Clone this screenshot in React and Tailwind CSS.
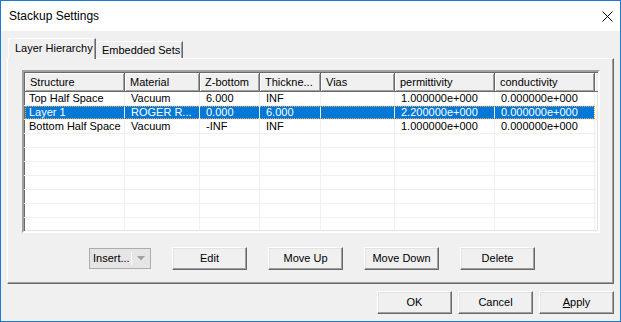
import React from "react";

const cols = [
  { label: "Structure", w: "w-[100px]", first: true },
  { label: "Material", w: "w-[75px]" },
  { label: "Z-bottom", w: "w-[60px]" },
  { label: "Thickne...", w: "w-[61px]" },
  { label: "Vias", w: "w-[74px]" },
  { label: "permittivity", w: "w-[100px]" },
  { label: "conductivity", w: "w-[100px]" },
];

const rows = [
  ["Top Half Space", "Vacuum", "6.000", "INF", "", "1.000000e+000", "0.000000e+000"],
  ["Layer 1", "ROGER R...", "0.000", "6.000", "", "2.200000e+000", "0.000000e+000"],
  ["Bottom Half Space", "Vacuum", "-INF", "INF", "", "1.000000e+000", "0.000000e+000"],
  ["", "", "", "", "", "", ""],
  ["", "", "", "", "", "", ""],
  ["", "", "", "", "", "", ""],
  ["", "", "", "", "", "", ""],
  ["", "", "", "", "", "", ""],
  ["", "", "", "", "", "", ""],
  ["", "", "", "", "", "", ""],
];

function Btn({ children, className = "" }) {
  return (
    <div
      className={`w-[75px] h-[23px] flex items-center justify-center bg-[#f0f0f0] border border-t-white border-l-white border-r-[#696969] border-b-[#696969] shadow-[inset_-1px_-1px_0_#a0a0a0,inset_1px_1px_0_#e3e3e3] text-[11px] text-black ${className}`}
    >
      {children}
    </div>
  );
}

export default function App() {
  return (
    <div className="w-[621px] h-[322px] border border-[#1a7bd0] bg-[#f0f0f0] flex flex-col font-['Liberation_Sans',Arial,sans-serif] text-black overflow-hidden">
      {/* title bar */}
      <div className="h-[30px] bg-white flex items-center justify-between pl-[8px] pr-[7px] shrink-0">
        <span className="text-[12px] leading-none">Stackup Settings</span>
        <svg width="11" height="11" viewBox="0 0 11 11" className="block">
          <path d="M0.5 0.5 L10.5 10.5 M10.5 0.5 L0.5 10.5" stroke="#000" strokeWidth="1" fill="none" />
        </svg>
      </div>

      {/* tabs */}
      <div className="mt-[7px] h-[20px] ml-[7px] flex items-end shrink-0 relative z-10">
        <div className="w-[88px] h-[21px] -mb-px bg-[#f0f0f0] border-t border-l border-r border-t-white border-l-white border-r-[#696969] shadow-[inset_-1px_0_0_#a0a0a0] flex items-start pt-[3px] pl-[6px] text-[11px] leading-[13px]">
          Layer Hierarchy
        </div>
        <div className="w-[87px] h-[17px] bg-[#f0f0f0] border-t border-r border-t-white border-r-[#696969] shadow-[inset_-1px_0_0_#a0a0a0] flex items-start pt-[2px] pl-[6px] text-[11px] leading-[13px]">
          Embedded Sets
        </div>
      </div>

      {/* panel */}
      <div className="ml-[6px] w-[607px] h-[226px] shrink-0 border border-t-white border-l-white border-r-[#696969] border-b-[#696969] shadow-[inset_-1px_-1px_0_#a0a0a0] flex flex-col">
        {/* list */}
        <div className="ml-[14px] mt-[11px] w-[578px] h-[163px] border-2 border-t-[#a0a0a0] border-l-[#a0a0a0] border-r-white border-b-white shadow-[inset_1px_1px_0_#696969,inset_-1px_-1px_0_#e3e3e3] bg-white overflow-hidden flex flex-col">
          <div className="flex h-[20px] shrink-0 pt-px pl-px">
            {cols.map((c) => (
              <div
                key={c.label}
                className={`${c.w} h-[19px] shrink-0 bg-[#f0f0f0] border-r border-b border-r-[#696969] border-b-[#696969] shadow-[inset_1px_1px_0_#fff,inset_-1px_-1px_0_#a0a0a0] flex items-center pl-[5px] text-[11px] leading-none whitespace-nowrap overflow-hidden`}
              >
                {c.label}
              </div>
            ))}
            <div className="w-[3px] h-[19px] shrink-0 bg-[#f0f0f0] border-b border-b-[#696969] shadow-[inset_1px_1px_0_#fff]" />
          </div>
          {rows.map((r, i) => {
            const sel = i === 1;
            return (
              <div key={i} className="flex h-[14px] shrink-0 border-b border-[#f0f0f0] pl-px">
                <div
                  className={`flex h-[13px] ${sel ? "bg-[#0078d7] text-white outline outline-1 outline-dotted outline-[#f5a442] -outline-offset-1" : ""}`}
                >
                  {cols.map((c, j) => (
                    <div
                      key={j}
                      className={`${c.w} h-[13px] shrink-0 border-r border-[#f0f0f0] flex items-center ${j === 0 ? "pl-[4px]" : "pl-[6px]"} text-[11px] leading-none whitespace-nowrap overflow-hidden`}
                    >
                      {r[j]}
                    </div>
                  ))}
                </div>
                <div className="w-[3px] h-[13px] shrink-0" />
              </div>
            );
          })}
        </div>

        {/* buttons row */}
        <div className="mt-[14px] ml-[81px] h-[23px] flex items-center">
          <div className="w-[62px] h-[21px] border border-[#adadad] bg-[#e5e5e5] flex items-center text-[11px]">
            <span className="pl-[3px] w-[41px]">Insert...</span>
            <div className="w-px h-[13px] bg-white" />
            <div className="flex-1 flex items-center justify-center">
              <svg width="8" height="5" viewBox="0 0 8 5" className="block">
                <path d="M0 0 L8 0 L4 4.5 Z" fill="#a0a0a0" />
              </svg>
            </div>
          </div>
          <Btn className="ml-[21px]">Edit</Btn>
          <Btn className="ml-[21px]">Move Up</Btn>
          <Btn className="ml-[21px]">Move Down</Btn>
          <Btn className="ml-[21px]">Delete</Btn>
        </div>
      </div>

      {/* bottom buttons */}
      <div className="mt-[7px] flex justify-end pr-[6px] gap-[6px] shrink-0">
        <Btn>OK</Btn>
        <Btn>Cancel</Btn>
        <Btn>
          <span>
            <span className="underline">A</span>pply
          </span>
        </Btn>
      </div>
    </div>
  );
}
